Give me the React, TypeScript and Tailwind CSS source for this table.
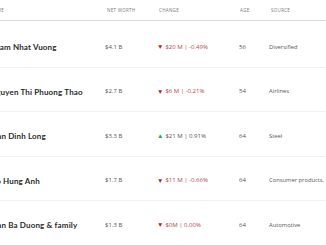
import React from "react";

type Row = {
  name: string;
  worth: string;
  up: boolean;
  change: string;
  changeColor: string;
  age: string;
  source: string;
};

const rows: Row[] = [
  { name: "Pham Nhat Vuong", worth: "$4.1 B", up: false, change: "$20 M | -0.49%", changeColor: "text-[#b5474b]", age: "56", source: "Diversified" },
  { name: "Nguyen Thi Phuong Thao", worth: "$2.7 B", up: false, change: "$6 M | -0.21%", changeColor: "text-[#b5474b]", age: "54", source: "Airlines" },
  { name: "Tran Dinh Long", worth: "$3.3 B", up: true, change: "$21 M | 0.91%", changeColor: "text-[#555]", age: "64", source: "Steel" },
  { name: "Do Hung Anh", worth: "$1.7 B", up: false, change: "$11 M | -0.66%", changeColor: "text-[#b5474b]", age: "64", source: "Consumer products," },
  { name: "Tran Ba Duong & family", worth: "$1.3 B", up: false, change: "$0M | 0.00%", changeColor: "text-[#b5474b]", age: "64", source: "Automotive" },
];

const cols = "grid grid-cols-[115px_52px_82px_30px_1fr]";

export default function App() {
  return (
    <div className="w-[326px] h-[245px] overflow-hidden bg-white" style={{ fontFamily: "'Open Sans', sans-serif" }}>
      <div className="ml-[-10px] w-[360px]">
        <div className={`${cols} h-[21px] items-center border-b border-[#dcdcdc] text-[4.5px] tracking-[0.3px] text-[#777] uppercase`}>
          <div>Name</div>
          <div className="pl-[2px]">Net Worth</div>
          <div className="pl-[2px]">Change</div>
          <div className="pl-[1px]">Age</div>
          <div className="pl-[2px]">Source</div>
        </div>
        <div className="mt-[2px]">
          {rows.map((r) => (
            <div key={r.name} className={`${cols} h-[44.5px] pt-[5px] items-center border-b border-[#f0f0f0]`}>
              <div className="text-[8px] font-bold text-[#2b2b2b] tracking-[0.15px]" style={{ fontFamily: "Lato, sans-serif" }}>{r.name}</div>
              <div className="text-[6px] text-[#555]">{r.worth}</div>
              <div className={`text-[6px] flex items-center gap-[2px] ${r.changeColor}`}>
                <span className={`text-[6.5px] leading-none ${r.up ? "text-[#2e9e4f]" : "text-[#c01c2e]"}`}>{r.up ? "▲" : "▼"}</span>
                <span>{r.change}</span>
              </div>
              <div className="text-[6px] text-[#555]">{r.age}</div>
              <div className="text-[5.8px] text-[#555]">{r.source}</div>
            </div>
          ))}
        </div>
      </div>
    </div>
  );
}
